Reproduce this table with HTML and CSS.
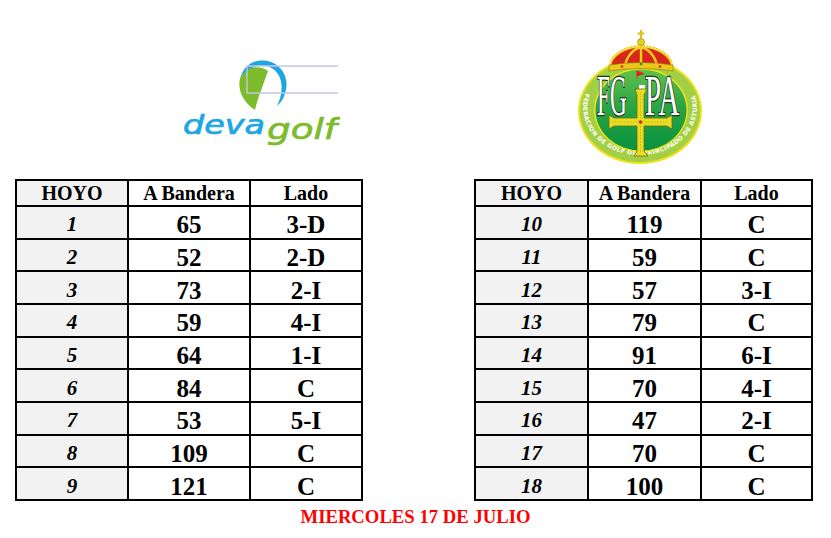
FILE: index.html
```html
<!DOCTYPE html>
<html lang="es">
<head>
<meta charset="utf-8">
<title>Posiciones de bandera</title>
<link rel="stylesheet" href="styles.css">
</head>
<body>
<div class="page">
  <div class="logos">
    <svg class="deva" viewBox="0 0 160 105" xmlns="http://www.w3.org/2000/svg">
      <path d="M88 16 C82 11 68 10 62 19 C56 29 60 45 75 55 C78 42 84 28 88 16 Z" fill="#7cbc2c"/>
      <path d="M61 22 C64 10 74 5 84 5.5 C97 6.5 107 17 106.5 30 C106 40 102 47 97 51 C100 45 102 38 101.5 30 C101 19 93 11 83 10.5 C74 10 66 15 61 22 Z" fill="#1ea6e2"/>
      <path d="M158 11 H67 V38 H158" fill="none" stroke="#c3c8de" stroke-width="1.4"/>
      <text class="deva-t" x="3" y="79" textLength="82" lengthAdjust="spacingAndGlyphs">deva</text>
      <text class="golf-t" x="87" y="84" textLength="70" lengthAdjust="spacingAndGlyphs">golf</text>
    </svg>
    <svg class="crest" viewBox="0 0 130 138" xmlns="http://www.w3.org/2000/svg">
      <defs>
        <linearGradient id="disc" x1="0" y1="0" x2="0" y2="1">
          <stop offset="0" stop-color="#63c14a"/>
          <stop offset="0.45" stop-color="#2aa645"/>
          <stop offset="1" stop-color="#08923f"/>
        </linearGradient>
        <path id="ring" d="M8.5 66.2 A57 48 0 1 0 117.5 66.2"/>
      </defs>
      <ellipse cx="63" cy="84" rx="62" ry="53" fill="#efe21a"/>
      <ellipse cx="63" cy="84" rx="60" ry="51" fill="#a3cf45"/>
      <text class="ring-t"><textPath href="#ring" textLength="196" lengthAdjust="spacing">FEDERACION DE GOLF DEL PRINCIPADO DE ASTURIAS</textPath></text>
      <ellipse cx="64" cy="83" rx="47" ry="42" fill="#f1e21c"/>
      <ellipse cx="64" cy="83" rx="45.5" ry="40.5" fill="url(#disc)"/>
      <path d="M60 44 L60 52 M60 44 L67 46.5 L60 49 Z" fill="#e0261c" stroke="#e0261c" stroke-width="0.8"/>
      <rect x="62" y="58" width="6" height="5" fill="#ffffff"/>
      <path d="M33 40 C33 26 48 19 64 19 C80 19 95 26 95 40 Z" fill="#d9261c"/>
      <path d="M33 40 C33 28 48 20 64 19 C80 20 95 28 95 40 M48 40 C49 30 56 22 64 20 C72 22 79 30 80 40 M64 20 V40" fill="none" stroke="#f0d21a" stroke-width="2.4"/>
      <path d="M33 40 C33 28 48 20 64 19 C80 20 95 28 95 40" fill="none" stroke="#ffffff" stroke-width="1" stroke-dasharray="1.2 2"/>
      <path d="M32 38 Q64 33 96 38 L96 44 Q64 39 32 44 Z" fill="#e9c81a" stroke="#8a7a10" stroke-width="0.6"/>
      <circle cx="45" cy="39.5" r="1.3" fill="#d9261c"/>
      <circle cx="64" cy="37" r="1.3" fill="#2a8a3a"/>
      <circle cx="83" cy="39.5" r="1.3" fill="#d9261c"/>
      <circle cx="64" cy="15" r="3.5" fill="#e8cf1e" stroke="#8a7a10" stroke-width="0.6"/>
      <path d="M64 3 V11 M60.5 6.5 H67.5" stroke="#d8c21c" stroke-width="2.2"/>
      <text class="mono" transform="translate(20 88) scale(0.4 1)" x="0" y="0">FG</text>
      <text class="mono" transform="translate(68 88) scale(0.5 1)" x="0" y="0">PA</text>
      <path d="M58 62 L70 62 L67 68 L67 91 L90 91 L95 88 L95 102 L90 99 L67 99 L67 124 L71 129 L57 129 L60 124 L60 99 L37 99 L32 102 L32 88 L37 91 L60 91 L60 68 Z" fill="#e9dd24" stroke="#6f6a12" stroke-width="0.8"/>
      <path d="M63.5 66 V126 M35 95 H92" stroke="#c8b81a" stroke-width="1" stroke-dasharray="1.5 1.5"/>
      <circle cx="63.5" cy="95" r="1.8" fill="#d9261c"/>
    </svg>
  </div>
  <div class="tables">
    <table class="holes left">
      <colgroup><col class="c1"><col class="c2"><col class="c3"></colgroup>
      <tr class="head"><th class="hoyo">HOYO</th><th>A Bandera</th><th>Lado</th></tr>
      <tr><td class="hoyo">1</td><td>65</td><td>3-D</td></tr>
      <tr><td class="hoyo">2</td><td>52</td><td>2-D</td></tr>
      <tr><td class="hoyo">3</td><td>73</td><td>2-I</td></tr>
      <tr><td class="hoyo">4</td><td>59</td><td>4-I</td></tr>
      <tr><td class="hoyo">5</td><td>64</td><td>1-I</td></tr>
      <tr><td class="hoyo">6</td><td>84</td><td>C</td></tr>
      <tr><td class="hoyo">7</td><td>53</td><td>5-I</td></tr>
      <tr><td class="hoyo">8</td><td>109</td><td>C</td></tr>
      <tr><td class="hoyo">9</td><td>121</td><td>C</td></tr>
    </table>
    <table class="holes right">
      <colgroup><col class="c1"><col class="c2"><col class="c3"></colgroup>
      <tr class="head"><th class="hoyo">HOYO</th><th>A Bandera</th><th>Lado</th></tr>
      <tr><td class="hoyo">10</td><td>119</td><td>C</td></tr>
      <tr><td class="hoyo">11</td><td>59</td><td>C</td></tr>
      <tr><td class="hoyo">12</td><td>57</td><td>3-I</td></tr>
      <tr><td class="hoyo">13</td><td>79</td><td>C</td></tr>
      <tr><td class="hoyo">14</td><td>91</td><td>6-I</td></tr>
      <tr><td class="hoyo">15</td><td>70</td><td>4-I</td></tr>
      <tr><td class="hoyo">16</td><td>47</td><td>2-I</td></tr>
      <tr><td class="hoyo">17</td><td>70</td><td>C</td></tr>
      <tr><td class="hoyo">18</td><td>100</td><td>C</td></tr>
    </table>
  </div>
  <p class="date">MIERCOLES 17 DE JULIO</p>
</div>
</body>
</html>
```
FILE: styles.css
```css
html, body {
  margin: 0;
  padding: 0;
  background: #ffffff;
}
body {
  font-family: "Liberation Serif", "Times New Roman", serif;
  color: #000000;
}
.page {
  width: 831px;
  height: 538px;
  overflow: hidden;
}
.logos {
  display: flex;
  align-items: flex-start;
  height: 179px;
}
.deva {
  display: block;
  width: 160px;
  height: 105px;
  margin: 55px 0 0 180px;
}
.deva-t {
  font-family: "DejaVu Sans", sans-serif;
  font-style: italic;
  font-size: 27px;
  fill: #1ea6e2;
  stroke: #1ea6e2;
  stroke-width: 0.7;
}
.golf-t {
  font-family: "DejaVu Sans", sans-serif;
  font-style: italic;
  font-size: 29px;
  fill: #7cbc2c;
  stroke: #7cbc2c;
  stroke-width: 0.7;
}
.crest {
  display: block;
  width: 130px;
  height: 138px;
  margin: 27px 0 0 237px;
}
.ring-t {
  font-family: "DejaVu Sans", sans-serif;
  font-size: 6px;
  font-weight: bold;
  fill: #ffffff;
}
.mono {
  font-family: "Liberation Serif", serif;
  font-size: 58px;
  fill: #ffffff;
  stroke: #1d3a1d;
  stroke-width: 2.6;
  paint-order: stroke;
}
.tables {
  display: flex;
  align-items: flex-start;
  gap: 111px;
  padding-left: 15px;
}
.holes {
  border-collapse: separate;
  border-spacing: 0;
  table-layout: fixed;
  border-top: 2px solid #000;
  border-left: 2px solid #000;
}
.holes.left { width: 348px; }
.holes.left .c1 { width: 112px; }
.holes.left .c2 { width: 122px; }
.holes.left .c3 { width: 112px; }
.holes.right { width: 339px; }
.holes.right .c1 { width: 113px; }
.holes.right .c2 { width: 113px; }
.holes.right .c3 { width: 111px; }
.holes th,
.holes td {
  border-right: 2px solid #000;
  border-bottom: 2px solid #000;
  padding: 0;
  text-align: center;
  vertical-align: middle;
  font-weight: bold;
  line-height: 1;
}
.holes tr { height: 32.67px; }
.holes tr.head { height: 26px; }
.holes th {
  font-size: 20px;
}
.holes td {
  font-size: 25px;
  padding-top: 5px;
}
.holes .hoyo {
  background: #f2f2f2;
}
.holes td.hoyo {
  font-style: italic;
  font-size: 21px;
}
.date {
  margin: 5px 0 0;
  text-align: center;
  color: #ff0000;
  font-weight: bold;
  font-size: 18.7px;
  line-height: 21px;
}
```
